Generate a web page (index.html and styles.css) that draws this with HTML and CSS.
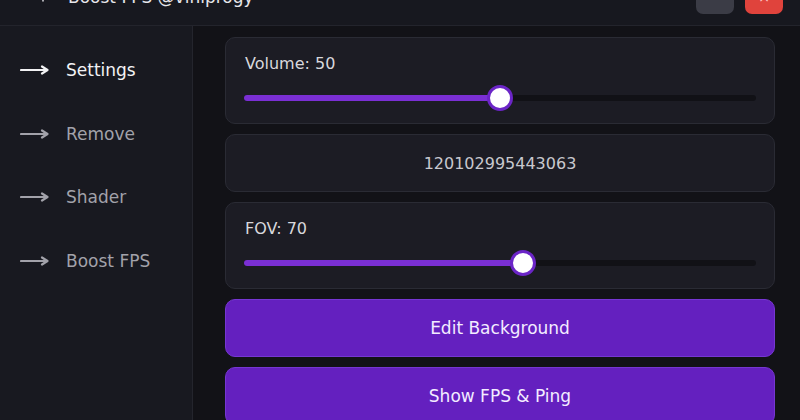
FILE: index.html
```html
<!DOCTYPE html>
<html>
<head>
<meta charset="utf-8">
<link rel="stylesheet" href="styles.css">
</head>
<body>
<div class="titlebar">
  <div class="title">
    <svg class="title-icon" width="10" height="10" viewBox="0 0 10 10"><path d="M5 9V1M2 4l3-3 3 3" stroke="#d0d0d6" stroke-width="1.6" fill="none" stroke-linecap="round"/></svg>
    <span class="title-text">Boost FPS @viniprogy</span>
  </div>
  <div class="win-btns">
    <div class="win-btn min"></div>
    <div class="win-btn close"><span class="x">×</span></div>
  </div>
</div>
<div class="main">
  <nav class="sidebar">
    <div class="nav-item active"><svg class="arrow" width="30" height="10" viewBox="0 0 30 10"><path d="M1 5H27M22 1.5L27.5 5 22 8.5" stroke="currentColor" stroke-width="2.2" fill="none" stroke-linecap="round" stroke-linejoin="round"/></svg><span>Settings</span></div>
    <div class="nav-item"><svg class="arrow" width="30" height="10" viewBox="0 0 30 10"><path d="M1 5H27M22 1.5L27.5 5 22 8.5" stroke="currentColor" stroke-width="2.2" fill="none" stroke-linecap="round" stroke-linejoin="round"/></svg><span>Remove</span></div>
    <div class="nav-item"><svg class="arrow" width="30" height="10" viewBox="0 0 30 10"><path d="M1 5H27M22 1.5L27.5 5 22 8.5" stroke="currentColor" stroke-width="2.2" fill="none" stroke-linecap="round" stroke-linejoin="round"/></svg><span>Shader</span></div>
    <div class="nav-item"><svg class="arrow" width="30" height="10" viewBox="0 0 30 10"><path d="M1 5H27M22 1.5L27.5 5 22 8.5" stroke="currentColor" stroke-width="2.2" fill="none" stroke-linecap="round" stroke-linejoin="round"/></svg><span>Boost FPS</span></div>
  </nav>
  <section class="content">
    <div class="card slider-card">
      <div class="label">Volume: 50</div>
      <div class="slider">
        <div class="track"><div class="fill" style="width:50%"><div class="thumb"></div></div></div>
      </div>
    </div>
    <div class="card text-card">120102995443063</div>
    <div class="card slider-card">
      <div class="label">FOV: 70</div>
      <div class="slider">
        <div class="track"><div class="fill" style="width:54.5%"><div class="thumb"></div></div></div>
      </div>
    </div>
    <button class="btn">Edit Background</button>
    <button class="btn">Show FPS &amp; Ping</button>
  </section>
</div>
</body>
</html>
```
FILE: styles.css
```css
* { box-sizing: border-box; }
html, body {
  margin: 0;
  padding: 0;
  width: 800px;
  height: 420px;
  overflow: hidden;
  background: #121217;
  font-family: "DejaVu Sans", "Noto Sans", sans-serif;
}
.titlebar {
  height: 26px;
  background: #17181f;
  border-bottom: 1px solid #23242c;
  display: flex;
  justify-content: space-between;
  overflow: hidden;
}
.title {
  display: flex;
  align-items: center;
  gap: 20px;
  margin-top: -15px;
  padding-left: 38px;
  height: 24px;
}
.title-text {
  color: #e6e6ea;
  font-size: 17px;
}
.win-btns {
  display: flex;
  gap: 11px;
  padding-right: 17px;
}
.win-btn {
  width: 38px;
  height: 14px;
  border-radius: 0 0 7px 7px;
  display: flex;
  justify-content: center;
  overflow: hidden;
}
.win-btn.min { background: #3b3c46; }
.win-btn.close { background: #e0433c; }
.win-btn .x {
  color: #ffc9c9;
  font-size: 14px;
  line-height: 14px;
  margin-top: -10px;
}
.main {
  display: flex;
  height: 394px;
}
.sidebar {
  width: 193px;
  background: #181920;
  border-right: 1px solid #24252d;
  padding-top: 33px;
  display: flex;
  flex-direction: column;
  gap: 41.5px;
}
.nav-item {
  display: flex;
  align-items: center;
  gap: 16px;
  padding-left: 20px;
  height: 22px;
  color: #a2a2aa;
  font-size: 17px;
}
.nav-item.active { color: #f2f2f4; }
.arrow { flex: none; }
.content {
  flex: 1;
  padding: 11px 25px 0 32px;
  display: flex;
  flex-direction: column;
  gap: 10px;
}
.card {
  flex: none;
  background: #1c1c24;
  border: 1px solid #2a2b34;
  border-radius: 10px;
}
.slider-card {
  padding: 15px 18px 12px 18px;
}
.label {
  color: #d8d8dc;
  font-size: 16px;
  line-height: 22px;
  padding-left: 1px;
}
.slider {
  margin-top: 10px;
  height: 26px;
  display: flex;
  align-items: center;
}
.track {
  width: 100%;
  height: 6px;
  border-radius: 3px;
  background: #111116;
}
.fill {
  height: 6px;
  border-radius: 3px;
  background: #7a2fd4;
  position: relative;
}
.thumb {
  position: absolute;
  right: -13px;
  top: -10px;
  width: 26px;
  height: 26px;
  border-radius: 50%;
  background: #ffffff;
  border: 3px solid #6b25c7;
}
.text-card {
  height: 58px;
  display: flex;
  align-items: center;
  justify-content: center;
  color: #c8c8ce;
  font-size: 16px;
}
.btn {
  flex: none;
  height: 58px;
  width: 100%;
  background: #6420bf;
  border: 1px solid #7636d2;
  border-radius: 10px;
  color: #f3ecff;
  font-family: "DejaVu Sans", "Noto Sans", sans-serif;
  font-size: 17px;
  padding: 0;
}
```
